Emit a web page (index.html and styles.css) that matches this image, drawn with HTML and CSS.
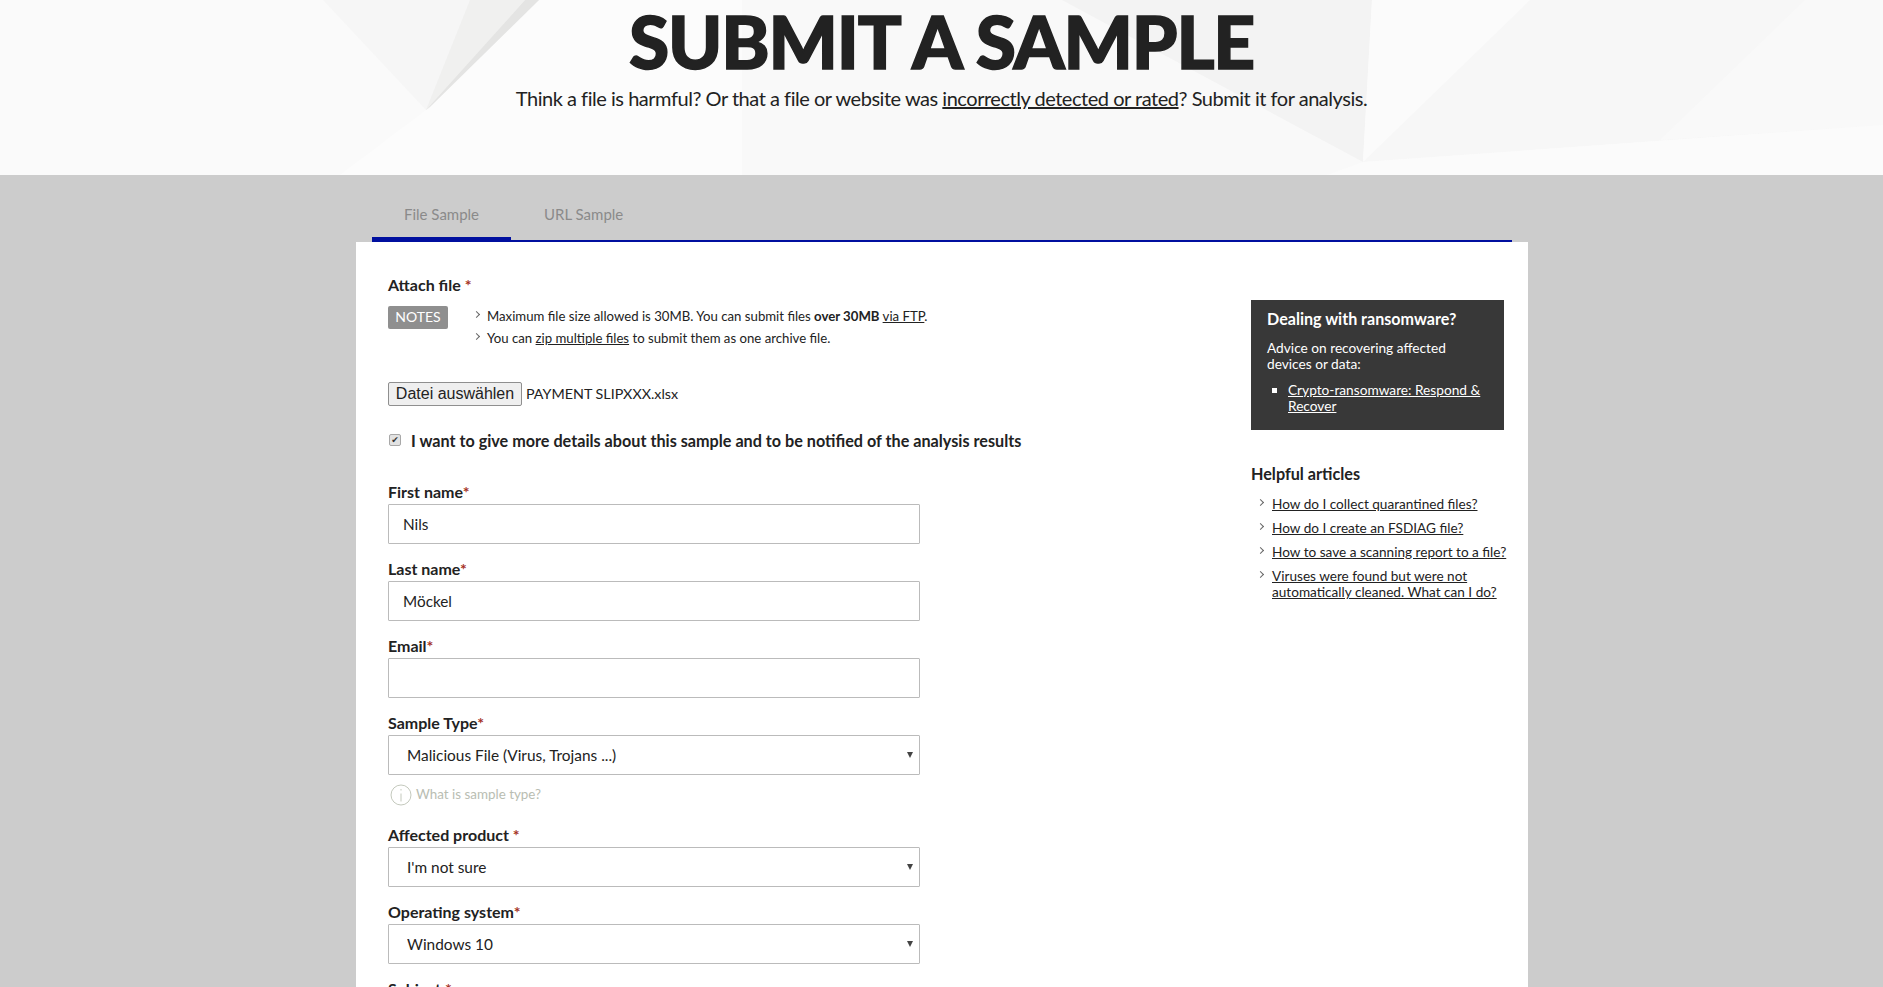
FILE: index.html
```html
<!DOCTYPE html>
<html lang="en">
<head>
    <meta charset="UTF-8">
    <title>Submit a Sample</title>
    <link rel="stylesheet" href="styles.css">
</head>
<body>
    <header class="hero">
        <svg class="hero-bg" viewBox="0 0 1883 175" preserveAspectRatio="none">
            <polygon points="426,110 539,0 742,0 742,175 340,175" fill="#fcfcfc"/>
            <polygon points="323,0 539,0 426,110" fill="#f6f6f6"/>
            <polygon points="470,0 525,0 426,110" fill="#f0f0ef"/>
            <polygon points="525,0 539,0 430,107 426,110" fill="#e4e4e3"/>
            <polygon points="742,0 1062,0 1363,162 1327,175 742,175" fill="#f9f9f9"/>
            <polygon points="1062,0 1372,0 1363,162" fill="#f3f3f3"/>
            <polygon points="1372,0 1530,0 1363,162" fill="#fbfbfb"/>
            <polygon points="1530,0 1883,0 1883,125 1363,162" fill="#f7f7f7"/>
            <polygon points="1805,0 1883,0 1883,125 1660,140" fill="#f9f9f9"/>
            <polygon points="1363,162 1883,125 1883,175 1327,175" fill="#fbfbfb"/>
        </svg>
        <h1>SUBMIT A SAMPLE</h1>
        <p>Think a file is harmful? Or that a file or website was <a href="#">incorrectly detected or rated</a>? Submit it for analysis.</p>
    </header>

    <main class="content">
        <nav class="tabs">
            <a class="tab active" href="#">File Sample</a>
            <a class="tab" href="#">URL Sample</a>
        </nav>

        <div class="panel">
            <form class="sample-form">
                <div class="attach-title">Attach file <span class="req">*</span></div>
                <div class="notes">
                    <span class="notes-badge">NOTES</span>
                    <ul class="arrow-list">
                        <li><span>Maximum file size allowed is 30MB. You can submit files <b>over 30MB</b> <a href="#">via FTP</a>.</span></li>
                        <li><span>You can <a href="#">zip multiple files</a> to submit them as one archive file.</span></li>
                    </ul>
                </div>
                <div class="file-row">
                    <button type="button" class="file-btn">Datei auswählen</button>
                    <span class="file-name">PAYMENT SLIPXXX.xlsx</span>
                </div>
                <label class="more-details">
                    <input type="checkbox" checked>
                    <span>I want to give more details about this sample and to be notified of the analysis results</span>
                </label>

                <div class="field">
                    <label>First name<span class="req">*</span></label>
                    <input type="text" value="Nils">
                </div>
                <div class="field">
                    <label>Last name<span class="req">*</span></label>
                    <input type="text" value="Möckel">
                </div>
                <div class="field">
                    <label>Email<span class="req">*</span></label>
                    <input type="text" value="">
                </div>
                <div class="field">
                    <label>Sample Type<span class="req">*</span></label>
                    <div class="select-wrap">
                        <select><option>Malicious File (Virus, Trojans ...)</option></select>
                    </div>
                    <div class="hint">
                        <svg width="22" height="22" viewBox="0 0 22 22" fill="none" stroke="#c4c9bd">
                            <circle cx="11" cy="11" r="10"/>
                            <path d="M11 9.5v8M11 5v1.5"/>
                        </svg>
                        <span>What is sample type?</span>
                    </div>
                </div>
                <div class="field">
                    <label>Affected product <span class="req">*</span></label>
                    <div class="select-wrap">
                        <select><option>I'm not sure</option></select>
                    </div>
                </div>
                <div class="field">
                    <label>Operating system<span class="req">*</span></label>
                    <div class="select-wrap">
                        <select><option>Windows 10</option></select>
                    </div>
                </div>
                <div class="field">
                    <label>Subject <span class="req">*</span></label>
                    <input type="text" value="">
                </div>
            </form>

            <aside class="sidebar">
                <div class="ransom-box">
                    <h3>Dealing with ransomware?</h3>
                    <p>Advice on recovering affected devices or data:</p>
                    <ul>
                        <li><a href="#">Crypto-ransomware: Respond &amp; Recover</a></li>
                    </ul>
                </div>
                <h3 class="articles-title">Helpful articles</h3>
                <ul class="arrow-list articles">
                    <li><a href="#">How do I collect quarantined files?</a></li>
                    <li><a href="#">How do I create an FSDIAG file?</a></li>
                    <li><a href="#">How to save a scanning report to a file?</a></li>
                    <li><a href="#">Viruses were found but were not automatically cleaned. What can I do?</a></li>
                </ul>
            </aside>
        </div>
    </main>
</body>
</html>
```

FILE: styles.css
```css
html, body {
    height: 100%;
    margin: 0;
    overflow: hidden;
}
body {
    font-family: Lato, "Open Sans", sans-serif;
    font-size: 16px;
    color: #222;
    background-color: #cccccc;
}
a {
    color: inherit;
}
ul {
    list-style: none;
    margin: 0;
    padding: 0;
}

/* header */
.hero {
    position: relative;
    height: 175px;
    background-color: #fafafa;
    text-align: center;
}
.hero-bg {
    position: absolute;
    left: 0;
    top: 0;
    width: 100%;
    height: 100%;
}
.hero h1 {
    position: relative;
    margin: 0;
    font-size: 73px;
    font-weight: 900;
    line-height: 82px;
    letter-spacing: -1.2px;
    color: #222;
    -webkit-text-stroke: 1.5px #222;
}
.hero p {
    position: relative;
    margin: 0;
    padding-top: 4px;
    font-size: 20px;
    line-height: 24px;
    letter-spacing: -0.47px;
}

/* tabs */
.tabs {
    display: flex;
    margin: 0 371px 0 372px;
    height: 67px;
    box-sizing: border-box;
    border-bottom: 2px solid #000f9f;
}
.tab {
    padding: 0 32px;
    height: 65px;
    box-sizing: border-box;
    line-height: 78px;
    font-size: 15px;
    color: #8a8a8a;
    text-decoration: none;
}
.tab + .tab {
    padding-left: 33px;
}
.tab.active {
    border-bottom: 3px solid #000f9f;
}

/* panel */
.panel {
    display: flex;
    justify-content: space-between;
    margin: 0 355px 0 356px;
    padding: 0 24px 0 32px;
    height: 800px;
    background: #fff;
}
.sample-form {
    width: 900px;
    padding-top: 33px;
}
.attach-title {
    font-weight: 700;
    line-height: 20px;
}
.req {
    color: #a5321f;
}
.notes {
    display: flex;
    margin-top: 11px;
}
.notes-badge {
    width: 60px;
    height: 23px;
    background: #8f8f8f;
    border-radius: 2px;
    color: #fff;
    font-size: 14px;
    line-height: 22px;
    text-align: center;
}
.notes .arrow-list {
    margin-left: 26px;
    padding-top: 2px;
    font-size: 13.2px;
}
.notes .arrow-list li {
    margin-bottom: 6px;
}
.arrow-list li {
    display: flex;
    line-height: 16px;
}
.arrow-list li::before {
    content: "";
    flex: none;
    width: 4px;
    height: 4px;
    margin: 4px 8px 0 0;
    border-top: 1.5px solid #666;
    border-right: 1.5px solid #666;
    transform: rotate(45deg);
}
.file-row {
    display: flex;
    align-items: center;
    gap: 4px;
    margin-top: 30px;
    font-size: 14.3px;
}
.file-name {
    margin-bottom: 2px;
}
.file-btn {
    width: 134px;
    height: 24px;
    padding: 0;
    border: 1px solid #8f8f8f;
    border-radius: 2px;
    background: #efefef;
    font-family: "Liberation Sans", Arial, sans-serif;
    font-size: 16px;
    color: #222;
}
.more-details {
    display: flex;
    align-items: center;
    gap: 10px;
    height: 20px;
    margin: 24px 0 33px;
    font-size: 16.2px;
    font-weight: 700;
}
.more-details input {
    appearance: none;
    display: flex;
    align-items: center;
    justify-content: center;
    width: 12px;
    height: 12px;
    margin: -1px 0 0 1px;
    border: 1px solid #a8a8a8;
    border-radius: 2px;
    background: #e2e2e2;
}
.more-details input:checked::before {
    content: "✔";
    font-family: "DejaVu Sans", sans-serif;
    font-size: 9px;
    line-height: 10px;
    color: #333;
}
.field {
    width: 532px;
    margin-top: 16px;
}
.field label {
    display: block;
    font-weight: 700;
    line-height: 18px;
}
.field input,
.field select {
    display: block;
    width: 100%;
    height: 40px;
    box-sizing: border-box;
    margin-top: 3px;
    border: 1px solid #bbb;
    border-radius: 1px;
    background-color: #fff;
    font-family: inherit;
    color: #222;
}
.field input {
    padding: 0 14px;
    font-size: 15.3px;
}
.field select {
    appearance: none;
    padding: 0 18px;
    font-size: 15.4px;
}
.select-wrap {
    position: relative;
}
.select-wrap::after {
    content: "";
    position: absolute;
    right: 7px;
    top: 17px;
    border-left: 3.5px solid transparent;
    border-right: 3.5px solid transparent;
    border-top: 6px solid #444;
}
.hint {
    display: flex;
    align-items: center;
    gap: 4px;
    margin: 9px 0 0 2px;
    padding-bottom: 4px;
    font-size: 13.4px;
    color: #b9bdb2;
}
.hint span {
    padding-bottom: 2px;
}

/* sidebar */
.sidebar {
    width: 253px;
    padding-top: 58px;
}
.ransom-box {
    padding: 9px 16px 16px;
    background: #383838;
    color: #fff;
    font-size: 13.7px;
    line-height: 16px;
}
.ransom-box h3 {
    margin: 0;
    font-size: 16.1px;
    line-height: 20px;
}
.ransom-box p {
    margin: 11px 0 10px;
}
.ransom-box ul {
    list-style: square;
    padding-left: 21px;
}
.articles-title {
    margin: 34px 0 12px;
    font-size: 16.2px;
    line-height: 20px;
}
.articles {
    padding-left: 7px;
    width: 256px;
    font-size: 13.6px;
}
.articles li {
    margin-bottom: 8px;
}
.articles li::before {
    margin-right: 9px;
}
```
